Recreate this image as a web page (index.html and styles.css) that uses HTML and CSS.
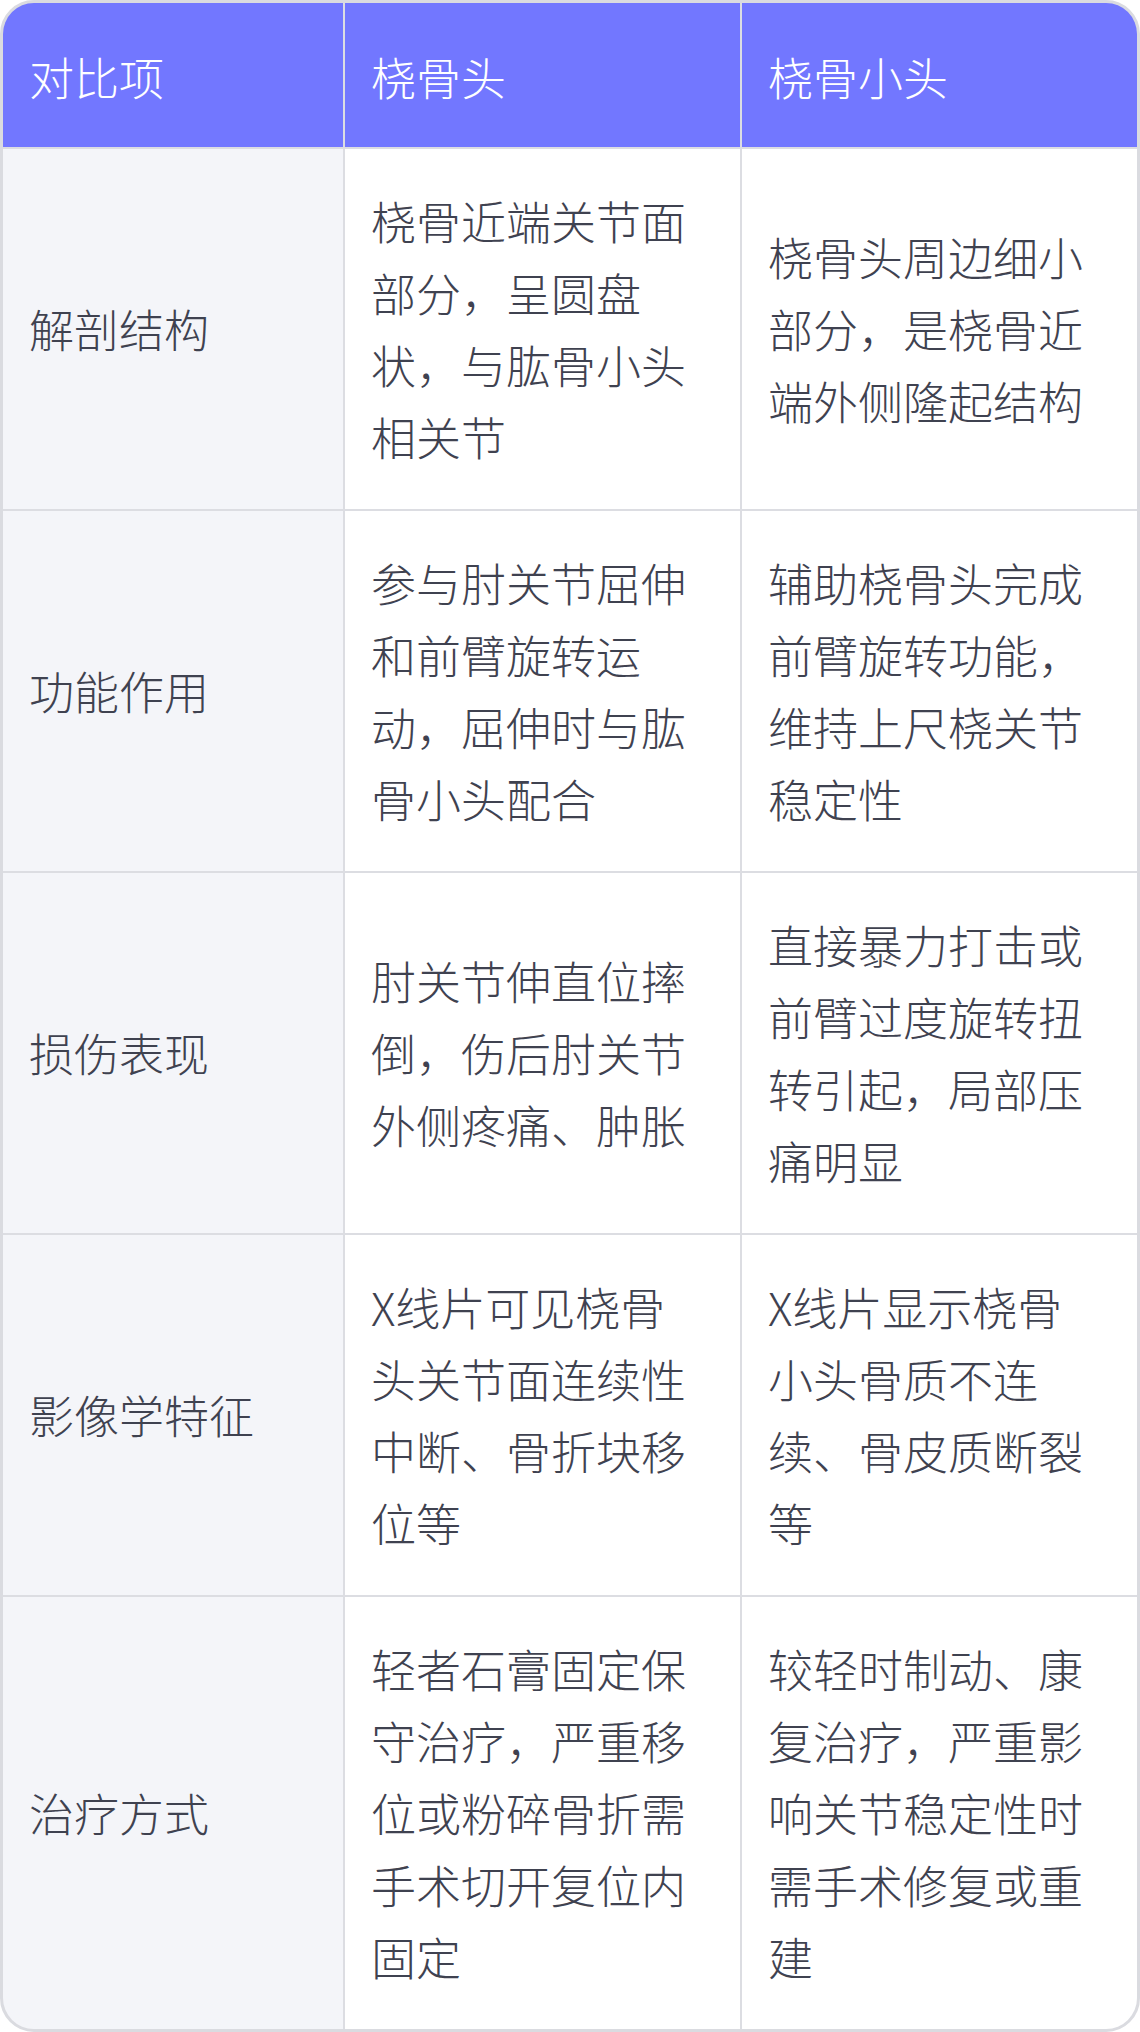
FILE: index.html
```html
<!DOCTYPE html>
<html lang="zh-CN">
<head>
<meta charset="utf-8">
<link rel="stylesheet" href="styles.css">
</head>
<body>
<div class="table">
  <div class="cell head">对比项</div>
  <div class="cell head">桡骨头</div>
  <div class="cell head">桡骨小头</div>

  <div class="cell label">解剖结构</div>
  <div class="cell">桡骨近端关节面部分，呈圆盘状，与肱骨小头相关节</div>
  <div class="cell">桡骨头周边细小部分，是桡骨近端外侧隆起结构</div>

  <div class="cell label">功能作用</div>
  <div class="cell">参与肘关节屈伸和前臂旋转运动，屈伸时与肱骨小头配合</div>
  <div class="cell">辅助桡骨头完成前臂旋转功能，维持上尺桡关节稳定性</div>

  <div class="cell label">损伤表现</div>
  <div class="cell">肘关节伸直位摔倒，伤后肘关节外侧疼痛、肿胀</div>
  <div class="cell">直接暴力打击或前臂过度旋转扭转引起，局部压痛明显</div>

  <div class="cell label">影像学特征</div>
  <div class="cell">X线片可见桡骨头关节面连续性中断、骨折块移位等</div>
  <div class="cell">X线片显示桡骨小头骨质不连续、骨皮质断裂等</div>

  <div class="cell label">治疗方式</div>
  <div class="cell">轻者石膏固定保守治疗，严重移位或粉碎骨折需手术切开复位内固定</div>
  <div class="cell">较轻时制动、康复治疗，严重影响关节稳定性时需手术修复或重建</div>
</div>
</body>
</html>
```
FILE: styles.css
```css
html, body {
  margin: 0;
  padding: 0;
  background: #ffffff;
}

body {
  font-family: "Noto Sans CJK SC Light", "Noto Sans CJK SC DemiLight", "Noto Sans CJK SC", "Noto Sans", sans-serif;
  font-weight: 300;
}

.table {
  box-sizing: border-box;
  width: 1140px;
  height: 2032px;
  border: 3px solid #dadbe0;
  border-radius: 34px;
  overflow: hidden;
  background: #dcdde2;
  display: grid;
  grid-template-columns: 340px 395px 395px;
  gap: 2px;
}

.cell {
  background: #ffffff;
  color: #3f4250;
  font-size: 45px;
  line-height: 72px;
  padding: 36px 30px 36px 26px;
  display: flex;
  align-items: center;
  word-break: break-all;
}

.head {
  background: #7277ff;
  color: #ffffff;
  padding-top: 38px;
  padding-bottom: 34px;
}

.label {
  background: #f4f5f9;
}
```
